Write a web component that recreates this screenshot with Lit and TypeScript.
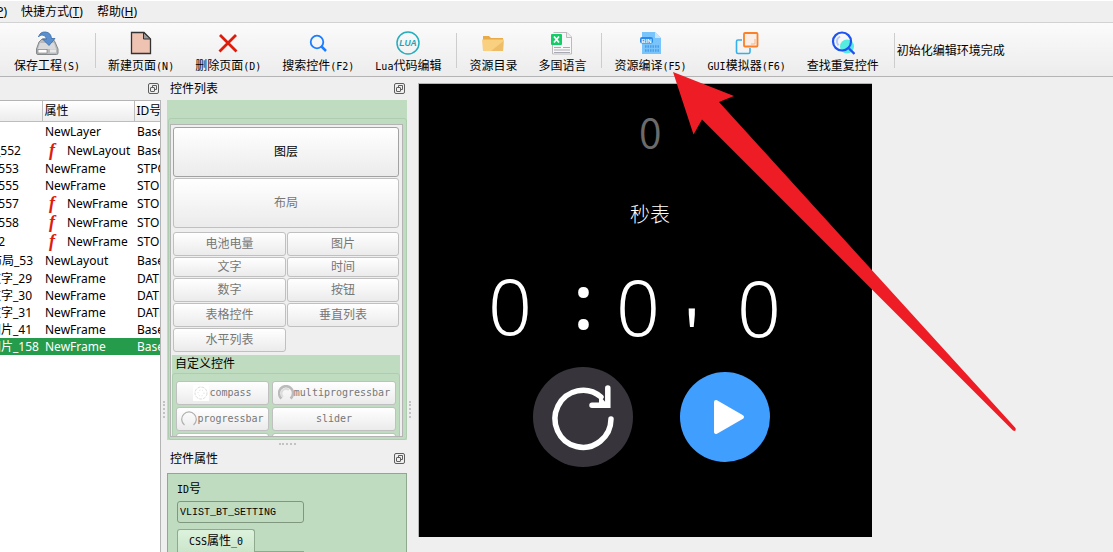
import { LitElement, html, css, svg, nothing } from "lit";
import { customElement } from "lit/decorators.js";

/** Wraps half-width runs so that they take exactly half of a CJK cell. */
const mixed = (text: string) =>
  text
    .split(/([\x20-\x7e]+)/)
    .filter((part) => part)
    .map((part) => (/^[\x20-\x7e]/.test(part) ? html`<span class="half">${part}</span>` : part));

const icons = {
  save: svg`<path d="M4 11 L7 8 H18 L20 11 L23 18 V22 Q23 23.500 21.500 23.500 H3 Q1.500 23.500 1.500 22 V18 Z" fill="#b9bbbd" stroke="#85888b"/><path d="M5 12 H19 L21 18 H3 Z" fill="#d9dadb"/><rect x="3" y="18.500" width="9" height="3.500" fill="#fff" stroke="#777" stroke-width=".6"/><rect x="15" y="18.500" width="6" height="3" fill="#e8e8e8"/><path d="M3.500 6 Q5 .5 10.500 1 Q16 1.500 16.500 7.500 H20 L14 14.500 L7.500 8 H11.500 Q11 4 7 4 Q4.500 4 3.500 6 Z" fill="#5b90cf" stroke="#3a6ba8" stroke-width=".8"/>`,
  page: svg`<path d="M2.500 1.500 H15 L21.500 8 V22.500 H2.500 Z" fill="#efc3b2" stroke="#333" stroke-width="1.300"/><path d="M14.500 1.500 V8 H21.500 Z" fill="#9a9a9a" stroke="#333"/>`,
  remove: svg`<path d="M4 4 L20.500 20.500 M20 4 L3.500 20.500" stroke="#dd1c0c" stroke-width="2.800"/>`,
  search: svg`<circle cx="11" cy="11" r="6.300" fill="none" stroke="#1b7dff" stroke-width="1.800"/><path d="M15.500 15.500 L20 20" stroke="#1b7dff" stroke-width="2.500"/>`,
  lua: svg`<circle cx="12" cy="12" r="11" fill="none" stroke="#25aebd" stroke-width="1.500"/><text x="12" y="15" text-anchor="middle" font-family="Liberation Sans" font-size="8.500" font-weight="700" font-style="italic" fill="#1ca5b8">LUA</text>`,
  folder: svg`<path d="M2 5 H8 L10 7 H22 V20 H2 Z" fill="#e9aa48"/><path d="M1 8.500 H23 L22 20 H2 Z" fill="#f9cf80"/><path d="M10 20 L22.500 10 L22 20 Z" fill="#eebd68"/>`,
  sheet: svg`<path d="M3.500 1.500 H17 L21.500 6 V23 H2.500 V12" fill="#f8f8f8" stroke="#bbb"/><path d="M16.500 1.500 V6.500 H21.500" fill="#eee" stroke="#bbb"/><rect x="1" y="3" width="11" height="11" rx="1" fill="#13ce66"/><path d="M4 5.500 L9 11.500 M9 5.500 L4 11.500" stroke="#fff" stroke-width="1.800"/><path d="M13 16.500 H20 M4 16.500 H11 M4 19 H20 M4 21.500 H20" stroke="#a9a9b4" stroke-width="1.200"/>`,
  bin: svg`<path d="M3 1 H16 L22 7 V23 H3 Z" fill="#79c4fb"/><path d="M16 1 V7 H22 Z" fill="#c3e5ff"/><rect x="1" y="6" width="13" height="6.500" rx="2" fill="#2c8bea"/><text x="7.500" y="11.500" text-anchor="middle" font-family="Liberation Sans" font-size="6" font-weight="700" fill="#fff">BIN</text><path d="M6 15.500 H20 M6 19.500 H20" stroke="#4a9fe8" stroke-width="2.400" stroke-dasharray="1.500 1"/>`,
  gui: svg`<path d="M7 9 H3 Q1.500 9 1.500 10.500 V21 Q1.500 22.500 3 22.500 H13.500 Q15 22.500 15 21 V17" fill="none" stroke="#36b0ec" stroke-width="1.600"/><rect x="9" y="2" width="13.500" height="13.500" rx="1" fill="#fbeee6" stroke="#fa8129" stroke-width="1.800"/><path d="M16 13 H20 V8" fill="none" stroke="#f6b48a"/>`,
  repeat: svg`<circle cx="16" cy="15.500" r="7" fill="#56ebe0"/><circle cx="11" cy="10.500" r="9" fill="none" stroke="#1d53f0" stroke-width="2.200"/><path d="M9 5.500 Q3.500 9 7.500 14.500" fill="none" stroke="#b5c8f8" stroke-width="2"/><path d="M18 17.500 L23.500 23" stroke="#1d53f0" stroke-width="2.400"/>`,
};

type Tool = { icon: keyof typeof icons; label: string } | null;

const tools: Tool[] = [
  { icon: "save", label: "保存工程(S)" },
  null,
  { icon: "page", label: "新建页面(N)" },
  { icon: "remove", label: "删除页面(D)" },
  { icon: "search", label: "搜索控件(F2)" },
  { icon: "lua", label: "Lua代码编辑" },
  null,
  { icon: "folder", label: "资源目录" },
  { icon: "sheet", label: "多国语言" },
  null,
  { icon: "bin", label: "资源编译(F5)" },
  { icon: "gui", label: "GUI模拟器(F6)" },
  { icon: "repeat", label: "查找重复控件" },
  null,
];

interface Row {
  indent: number;
  name: string;
  kind: string;
  id: string;
  script?: boolean;
  tall?: boolean;
  selected?: boolean;
}

const rows: Row[] = [
  { indent: 0, name: "", kind: "NewLayer", id: "Base", tall: true },
  { indent: 11, name: "布局_552", kind: "NewLayout", id: "Base", script: true },
  { indent: 9, name: "图片_553", kind: "NewFrame", id: "STPO" },
  { indent: 9, name: "图片_555", kind: "NewFrame", id: "STOP" },
  { indent: 9, name: "按钮_557", kind: "NewFrame", id: "STOP", script: true },
  { indent: 9, name: "按钮_558", kind: "NewFrame", id: "STOP", script: true },
  { indent: 9, name: "按钮_2", kind: "NewFrame", id: "STOP", script: true },
  { indent: 30, name: "布局_53", kind: "NewLayout", id: "Base", tall: true },
  { indent: 29, name: "数字_29", kind: "NewFrame", id: "DATE" },
  { indent: 29, name: "数字_30", kind: "NewFrame", id: "DATE" },
  { indent: 29, name: "数字_31", kind: "NewFrame", id: "DATE" },
  { indent: 29, name: "图片_41", kind: "NewFrame", id: "Base" },
  { indent: 29, name: "图片_158", kind: "NewFrame", id: "Base", selected: true },
];

const widgets = ["电池电量", "图片", "文字", "时间", "数字", "按钮", "表格控件", "垂直列表", "水平列表"];

@customElement("app-root")
export class AppRoot extends LitElement {
  static styles = css`
    :host {
      display: flex;
      flex-direction: column;
      position: relative;
      height: 100vh;
      overflow: hidden;
      background: #efefef;
      color: #000;
      font: 12px/16px "Liberation Sans", "Noto Sans CJK SC", sans-serif;
    }
    * { box-sizing: border-box; }
    button, input { font: inherit; color: inherit; margin: 0; }
    .half { font-family: "DejaVu Sans Mono", monospace; font-size: 10px; }

    .menu {
      display: flex;
      flex: none;
      height: 23px;
      border-top: 1px solid #fff;
      border-bottom: 1px solid #d2d2d2;
      font-family: "Noto Sans", "Noto Sans CJK SC", sans-serif;
    }
    .menu button { border: 0; background: none; padding: 0 7px; white-space: nowrap; }
    .menu .cut { width: 13px; display: flex; justify-content: flex-end; overflow: hidden; align-items: center; }

    .tools {
      display: flex;
      flex: none;
      gap: 1px;
      height: 54px;
      padding: 0 4px;
      background: linear-gradient(#fbfbfb, #ececec);
      border-bottom: 1px solid #b4b4b4;
    }
    .tool {
      display: flex;
      flex: none;
      flex-direction: column;
      align-items: center;
      border: 0;
      background: none;
      padding: 8px 10px 0;
      white-space: nowrap;
      line-height: 22px;
    }
    .tool svg { width: 24px; height: 24px; flex: none; }
    .rule { flex: none; width: 1px; height: 35px; margin: 10px 1px 0 4px; background: #cdcdcd; }
    .status { line-height: 57px; white-space: nowrap; }

    .main { display: flex; flex: 1; min-height: 0; }
    .title {
      display: flex;
      flex: none;
      align-items: center;
      justify-content: space-between;
      height: 23px;
      padding: 0 2px 0 3px;
    }
    .float { display: flex; border: 0; padding: 0; background: none; }
    .float svg { width: 11px; height: 11px; }

    .tree { flex: none; width: 161px; display: flex; flex-direction: column; overflow: hidden; }
    .view {
      flex: 1;
      overflow: hidden;
      background: #fff;
      border: solid #b4b4b4;
      border-width: 1px 1px 0 0;
      font-family: "Noto Sans", "Noto Sans CJK SC", sans-serif;
    }
    table { table-layout: fixed; width: 240px; margin-left: -40px; border-collapse: collapse; }
    .c1 { width: 82px; }
    .c2 { width: 92px; }
    th {
      height: 20px;
      padding: 0 2px;
      font-weight: 400;
      text-align: left;
      background: linear-gradient(#fff, #ececec);
      border: solid #bdbdbd;
      border-width: 0 1px 1px 0;
    }
    td { height: 17px; padding: 0 3px; line-height: 17px; white-space: nowrap; overflow: hidden; }
    .tall td { height: 19px; line-height: 19px; }
    .on td { background: #259b4c; color: #fff; }
    .cell { display: flex; }
    .fn {
      width: 22px;
      padding-left: 4px;
      color: #dd1c0c;
      font: italic 700 18px/18px "Liberation Serif", serif;
    }

    .grip { flex: none; display: flex; align-items: center; justify-content: center; }
    .grip.v { width: 6px; padding-top: 190px; }
    .grip.v::before { content: ""; height: 17px; border-left: 2px dotted #c2c2c2; }
    .grip.h { height: 7px; }
    .grip.h::before { content: ""; width: 17px; border-top: 2px dotted #c2c2c2; }

    .side { flex: none; width: 240px; display: flex; flex-direction: column; }
    .list {
      flex: 1;
      min-height: 0;
      display: flex;
      padding: 18px 0 0 1px;
      background: #c0dcc0;
    }
    .frame {
      flex: 1;
      display: flex;
      min-width: 0;
      padding: 5px 3px 2px 1px;
      border: 1px solid #b0ccb0;
      border-radius: 3px;
    }
    .area {
      flex: 1;
      min-width: 0;
      padding: 2px 3px 0 2px;
      overflow: hidden;
      background: #efefef;
      border: 1px solid #b4b4b4;
    }
    .key {
      display: flex;
      align-items: center;
      justify-content: center;
      min-width: 0;
      padding: 0;
      background: linear-gradient(#fff, #ebebeb);
      border: 1px solid #c0c0c0;
      border-radius: 3px;
      color: #777;
      white-space: nowrap;
    }
    .big { width: 100%; height: 50px; margin-bottom: 1px; }
    .first { color: #000; border-color: #a2a2a2; }
    .keys {
      display: grid;
      grid-template-columns: 113px 1fr;
      grid-template-rows: 24px 20px 24px 24px 24px;
      gap: 1px;
      padding-top: 3px;
    }
    .custom { margin: 3px -1px 0; background: #c0dcc0; }
    .caption { padding: 0 3px; line-height: 18px; }
    .pair {
      display: grid;
      grid-template-columns: 3fr 4fr;
      gap: 2px 3px;
      padding: 7px 3px;
      border: 1px solid #b0ccb0;
      border-radius: 3px;
    }
    .pair .key { height: 24px; }
    .pair svg { width: 16px; height: 16px; flex: none; }

    .props {
      flex: none;
      display: flex;
      flex-direction: column;
      align-items: flex-start;
      margin-top: 3px;
      padding: 7px 9px 0;
      background: #c0dcc0;
      border: 1px solid #8fa98f;
      border-bottom: 0;
    }
    .props label { line-height: 16px; margin-bottom: 3px; }
    .props input {
      width: 127px;
      height: 22px;
      padding: 0 2px;
      border: 1px solid #7f977f;
      border-radius: 3px;
      background: #c0dcc0;
      font: 10px "Liberation Mono", monospace;
    }
    .tabs { display: flex; width: 127px; margin-top: 6px; border-bottom: 1px solid #8fa98f; }
    .tabs button {
      height: 23px;
      padding: 0 11px;
      margin-bottom: -1px;
      border: 1px solid #8fa98f;
      border-bottom: 0;
      border-radius: 3px 3px 0 0;
      background: linear-gradient(#dcf2dc, #cbe5cb);
      white-space: nowrap;
    }

    .stage { flex: 1; min-width: 0; padding: 6px 5px; }
    .screen { position: relative; width: 454px; height: 454px; background: #000; color: #fff; border: solid #b4b4b4; border-width: 1px 0 0 1px; }
    .item { position: absolute; font-family: "Noto Sans", sans-serif; }
    .digit { font-size: 77px; line-height: 77px; font-weight: 360; }
    .colon { font-weight: 500; }
    .tick { font: 64px/64px "Noto Sans CJK SC", sans-serif; }
    .dim { color: #6b6b6b; font: 350 41px/41px "Noto Sans CJK SC", sans-serif; }
    .name { font: 300 20px/24px "Noto Sans CJK SC", sans-serif; }
    .round { position: absolute; border: 0; padding: 0; border-radius: 50%; background: none; }
    .round svg { display: block; width: 100%; height: 100%; }
    .reset { left: 114px; top: 283px; width: 100px; height: 100px; }
    .play { left: 261px; top: 288px; width: 90px; height: 90px; }
    .pointer { position: absolute; left: 673px; top: 72px; width: 344px; height: 360px; pointer-events: none; }
  `;

  private float() {
    return html`<button class="float" aria-label="浮动">
      <svg viewBox="0 0 11 11" fill="none" stroke="#5e5e5e">
        <rect x=".5" y=".5" width="10" height="10" rx="1.500" />
        <rect x="2.500" y="4.500" width="4" height="4" rx=".5" />
        <path d="M4.500 4.500 V2.500 H8.500 V6.500 H6.500" />
      </svg>
    </button>`;
  }

  private tool(t: Tool) {
    return t
      ? html`<button class="tool"><svg viewBox="0 0 24 24">${icons[t.icon]}</svg><span>${mixed(t.label)}</span></button>`
      : html`<span class="rule"></span>`;
  }

  private row(r: Row) {
    const cls = `${r.tall || r.script ? "tall" : ""} ${r.selected ? "on" : ""}`;
    return html`<tr class=${cls}>
      <td style="padding-left:${r.indent}px">${r.name}</td>
      <td><div class="cell">${r.script ? html`<span class="fn">f</span>` : nothing}${r.kind}</div></td>
      <td>${r.id}</td>
    </tr>`;
  }

  render() {
    return html`
      <nav class="menu">
        <button class="cut">(<u>P</u>)</button>
        <button>快捷方式(<u>T</u>)</button>
        <button>帮助(<u>H</u>)</button>
      </nav>
      <div class="tools">
        ${tools.map((t) => this.tool(t))}
        <span class="status">初始化编辑环境完成</span>
      </div>
      <div class="main">
        <section class="tree">
          <div class="title"><span></span>${this.float()}</div>
          <div class="view">
            <table>
              <thead>
                <tr><th class="c1"></th><th class="c2">属性</th><th>ID号</th></tr>
              </thead>
              <tbody>${rows.map((r) => this.row(r))}</tbody>
            </table>
          </div>
        </section>
        <div class="grip v"></div>
        <div class="side">
          <div class="title"><span>控件列表</span>${this.float()}</div>
          <div class="list"><div class="frame"><div class="area">
            <button class="key big first">图层</button>
            <button class="key big">布局</button>
            <div class="keys">${widgets.map((w) => html`<button class="key">${w}</button>`)}</div>
            <div class="custom">
              <div class="caption">自定义控件</div>
              <div class="pair">
                <button class="key">
                  <svg viewBox="0 0 16 16" fill="none" stroke="#ddd"><rect width="16" height="16" fill="#fff" stroke="none" /><circle cx="8" cy="8" r="6" stroke-dasharray="3 1" /><circle cx="8" cy="8" r="3" stroke-dasharray="1 2" /></svg>${mixed("compass")}
                </button>
                <button class="key">
                  <svg viewBox="0 0 16 16" fill="none"><path d="M3.500 13.500 A7 7 0 1 1 12.500 13.500" stroke="#bbb" stroke-width="2.500" /><path d="M5 12 A4.500 4.500 0 0 1 11 5" stroke="#ddd" stroke-width="2" /></svg>${mixed("multiprogressbar")}
                </button>
                <button class="key">
                  <svg viewBox="0 0 16 16" fill="none"><path d="M3.500 14 A7.300 7.300 0 1 1 12.500 14" stroke="#b0b0b0" stroke-width="1.200" /></svg>${mixed("progressbar")}
                </button>
                <button class="key">${mixed("slider")}</button>
                <button class="key"></button>
                <button class="key"></button>
              </div>
            </div>
          </div></div></div>
          <div class="grip h"></div>
          <div class="title"><span>控件属性</span>${this.float()}</div>
          <div class="props">
            <label for="ident">${mixed("ID号")}</label>
            <input id="ident" value="VLIST_BT_SETTING" />
            <div class="tabs"><button>${mixed("CSS属性_0")}</button></div>
          </div>
        </div>
        <div class="grip v"></div>
        <main class="stage">
          <div class="screen">
            <span class="item dim" style="left:220px;top:26px">0</span>
            <span class="item name" style="left:211px;top:118px">秒表</span>
            <span class="item digit" style="left:69px;top:183px">0</span>
            <span class="item digit colon" style="left:154px;top:177px">:</span>
            <span class="item digit" style="left:197px;top:184px">0</span>
            <span class="item tick" style="left:264px;top:214px">'</span>
            <span class="item digit" style="left:318px;top:185px">0</span>
            <button class="round reset" aria-label="重置">
              <svg viewBox="0 0 100 100">
                <circle cx="50" cy="50" r="50" fill="#37353b" />
                <path d="M78 52 A28 28.500 0 1 1 68 30" fill="none" stroke="#fff" stroke-width="5.500" stroke-linecap="round" />
                <path d="M74.800 21 V38.200 H59" fill="none" stroke="#fff" stroke-width="5.500" stroke-linecap="round" />
                <path d="M66 28 L75 38 H66 Z" fill="#fff" />
              </svg>
            </button>
            <button class="round play" aria-label="开始">
              <svg viewBox="0 0 90 90">
                <circle cx="45" cy="45" r="45" fill="#409eff" />
                <path d="M36 30 L62 45 L36 60 Z" fill="#fff" stroke="#fff" stroke-width="4" stroke-linejoin="round" />
              </svg>
            </button>
          </div>
        </main>
      </div>
      <svg class="pointer" viewBox="0 0 344 360">
        <path d="M0 0 L61 24 L46 30 L342.500 356 Q343.500 360 340 358.500 L29 47.500 L20.500 62.500 Z" fill="#ee1c25" />
      </svg>
    `;
  }
}
